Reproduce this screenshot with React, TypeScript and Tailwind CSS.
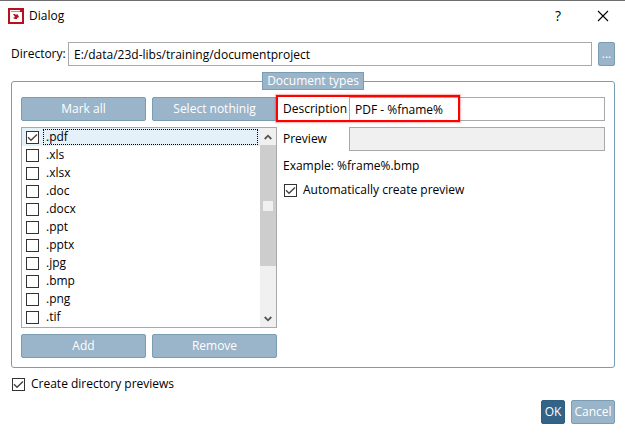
import React, { useState } from 'react'
import clsx from 'clsx'

const FILE_TYPES = ['.pdf', '.xls', '.xlsx', '.doc', '.docx', '.ppt', '.pptx', '.jpg', '.bmp', '.png', '.tif']

interface CheckBoxProps {
  id: string
  checked: boolean
  onChange: () => void
}

const CheckBox: React.FC<CheckBoxProps> = ({ id, checked, onChange }) => (
  <span className="relative block size-[13px] shrink-0">
    <input
      id={id}
      type="checkbox"
      checked={checked}
      onChange={onChange}
      className="block size-[13px] appearance-none border border-[#333333] bg-white"
    />
    {checked && (
      <svg viewBox="0 0 13 13" className="pointer-events-none absolute inset-0 size-[13px]">
        <path d="M2 6.3 L5 9.2 L11 3.4" fill="none" stroke="#444444" strokeWidth="1.4" />
      </svg>
    )}
  </span>
)

interface PushButtonProps {
  className?: string
  primary?: boolean
  children: React.ReactNode
}

const PushButton: React.FC<PushButtonProps> = ({ className, primary, children }) => (
  <button
    type="button"
    className={clsx(
      'h-6 rounded-[2px] border text-center text-white',
      primary ? 'border-[#2f5f80] bg-[#336488]' : 'border-[#7b9db4] bg-[#9ab4c9]',
      className
    )}
  >
    {children}
  </button>
)

const AppIcon = () => (
  <svg viewBox="0 0 16 16" className="size-4">
    <rect width="16" height="16" fill="#b8101f" />
    <path d="M2 2 H12 V4 H14 V14 H2 Z" fill="#ffffff" />
    <path d="M3 3.5 H12" stroke="#d4858c" strokeWidth="1" />
    <path d="M5 6 L7 6 L8 7 L9 6 L10 7 L11 9 L9 10 L9 11 L7 11 L5 10 L7 9 Z" fill="#b8101f" />
  </svg>
)

const TitleBar = () => (
  <header className="flex h-[30px] items-center pr-4 pl-2">
    <AppIcon />
    <h1 className="ml-[5px] flex-1">Dialog</h1>
    <button type="button" aria-label="Help" className="mr-[33px] w-3 text-center text-sm">
      ?
    </button>
    <button type="button" aria-label="Close">
      <svg viewBox="0 0 12 12" className="size-3">
        <path d="M1 1 L11 11 M11 1 L1 11" stroke="#000000" strokeWidth="1.1" />
      </svg>
    </button>
  </header>
)

const ScrollBar = () => (
  <div className="flex w-4 flex-col items-center bg-[#f0f0f0]">
    <div className="flex h-[17px] items-center">
      <svg viewBox="0 0 8 6" className="h-[6px] w-2">
        <path d="M0.7 5 L4 1.7 L7.3 5" fill="none" stroke="#555555" strokeWidth="1.8" />
      </svg>
    </div>
    <div className="flex h-[121px] w-full items-center justify-center bg-[#cdcdcd]">
      <div className="size-[10px] bg-[#f0f0f0]" />
    </div>
    <div className="flex-1" />
    <div className="flex h-[17px] items-center">
      <svg viewBox="0 0 8 6" className="h-[6px] w-2">
        <path d="M0.7 1 L4 4.3 L7.3 1" fill="none" stroke="#555555" strokeWidth="1.8" />
      </svg>
    </div>
  </div>
)

const App: React.FC = () => {
  const [marked, setMarked] = useState<string[]>(['.pdf'])
  const [autoPreview, setAutoPreview] = useState(true)
  const [directoryPreviews, setDirectoryPreviews] = useState(true)

  const toggle = (type: string) =>
    setMarked((prev) => (prev.includes(type) ? prev.filter((t) => t !== type) : [...prev, type]))

  return (
    <main className="min-h-screen border-t border-[#6e6e6e] bg-white font-['Open_Sans','Noto_Sans',sans-serif] text-[12px] leading-[18px] text-black">
      <TitleBar />

      <div className="pt-[11px] pr-[10px] pb-[10px] pl-[11px]">
        {/* Directory */}
        <div className="flex items-center gap-[6px]">
          <label htmlFor="directory" className="w-[51px] whitespace-nowrap">
            Directory:
          </label>
          <input
            id="directory"
            defaultValue="E:/data/23d-libs/training/documentproject"
            className="h-6 min-w-0 flex-1 border border-[#a9a9a9] px-[5px]"
          />
          <PushButton className="w-[17px]">...</PushButton>
        </div>

        {/* Document types */}
        <fieldset className="mt-[6px] min-w-0 rounded-[3px] border border-[#7b9db4] px-[9px] pt-[7px] pb-[9px]">
          <legend className="mx-auto h-[18px] border border-[#7b9db4] bg-[#9ab4c9] px-1 leading-4 text-white">
            Document types
          </legend>
          <div className="flex gap-[6px]">
            <div className="flex w-64 shrink-0 flex-col gap-[6px]">
              <div className="grid grid-cols-2 gap-[6px]">
                <PushButton>Mark all</PushButton>
                <PushButton>Select nothinig</PushButton>
              </div>

              <div className="flex border border-[#a9a9a9] bg-white">
                <ul className="flex-1 pb-px">
                  {FILE_TYPES.map((type, idx) => (
                    <li
                      key={type}
                      className={clsx('flex h-[18px] items-center gap-1 pr-[2px] pl-1', idx === 0 && 'bg-[#e5f1f9]')}
                    >
                      <CheckBox id={type} checked={marked.includes(type)} onChange={() => toggle(type)} />
                      <label
                        htmlFor={type}
                        className={clsx(
                          'h-4 flex-1 border border-dotted pl-[2px] leading-[14px]',
                          idx === 0 ? 'border-black' : 'border-transparent'
                        )}
                      >
                        {type}
                      </label>
                    </li>
                  ))}
                </ul>
                <ScrollBar />
              </div>

              <div className="grid grid-cols-2 gap-[6px]">
                <PushButton>Add</PushButton>
                <PushButton>Remove</PushButton>
              </div>
            </div>

            <div className="flex min-w-0 flex-1 flex-col gap-[6px]">
              <div className="relative flex items-center">
                <label htmlFor="description" className="w-[66px]">
                  Description
                </label>
                <input
                  id="description"
                  defaultValue="PDF - %fname%"
                  className="h-6 min-w-0 flex-1 border border-[#a9a9a9] px-[5px]"
                />
                <div className="pointer-events-none absolute -top-[2px] -left-[7px] h-[27px] w-[184px] border-2 border-[#ff0000] shadow-[0_0_1px_1px_#ff000040]" />
              </div>
              <div className="flex items-center">
                <label htmlFor="preview" className="w-[66px]">
                  Preview
                </label>
                <input
                  id="preview"
                  disabled
                  className="h-6 min-w-0 flex-1 border border-[#a9a9a9] bg-[#f0f0f0] px-[5px]"
                />
              </div>
              <p>Example: %frame%.bmp</p>
              <div className="flex items-center gap-[6px] pl-px">
                <CheckBox id="auto-preview" checked={autoPreview} onChange={() => setAutoPreview(!autoPreview)} />
                <label htmlFor="auto-preview">Automatically create preview</label>
              </div>
            </div>
          </div>
        </fieldset>

        <div className="mt-[7px] flex items-center gap-[6px] pl-px">
          <CheckBox
            id="directory-previews"
            checked={directoryPreviews}
            onChange={() => setDirectoryPreviews(!directoryPreviews)}
          />
          <label htmlFor="directory-previews">Create directory previews</label>
        </div>

        {/* Footer */}
        <div className="mt-[7px] flex justify-end gap-[6px]">
          <PushButton primary className="w-6">
            OK
          </PushButton>
          <PushButton className="w-11">Cancel</PushButton>
        </div>
      </div>
    </main>
  )
}

export default App
